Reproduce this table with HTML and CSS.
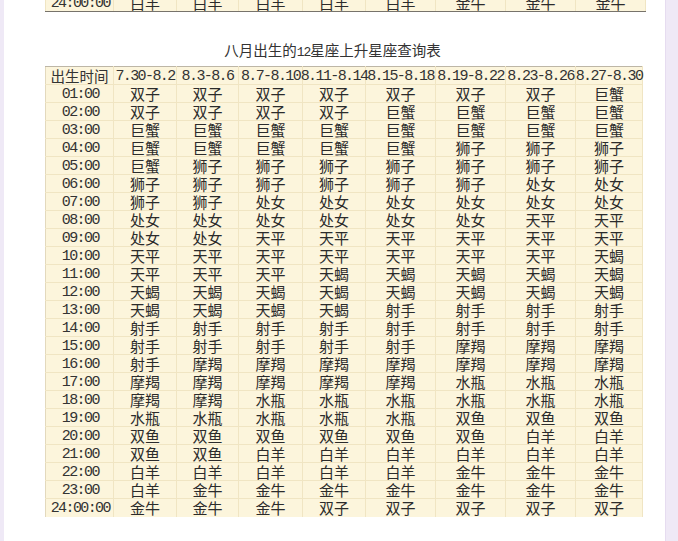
FILE: index.html
```html
<!DOCTYPE html>
<html lang="zh-CN">
<head>
<meta charset="utf-8">
<title>八月出生的12星座上升星座查询表</title>
<link rel="stylesheet" href="styles.css">
</head>
<body>
<div class="page">
  <table class="grid prev">
    <colgroup>
      <col class="c0"><col class="c1"><col class="c2"><col class="c3"><col class="c4"><col class="c5"><col class="c6"><col class="c7"><col class="c8w">
    </colgroup>
    <tr><td class="t">24:00:00</td><td>白羊</td><td>白羊</td><td>白羊</td><td>白羊</td><td>白羊</td><td>金牛</td><td>金牛</td><td>金牛</td></tr>
  </table>

  <h1 class="title">八月出生的<span class="num">12</span>星座上升星座查询表</h1>

  <table class="grid main">
    <colgroup>
      <col class="c0"><col class="c1"><col class="c2"><col class="c3"><col class="c4"><col class="c5"><col class="c6"><col class="c7"><col class="c8">
    </colgroup>
    <tr class="hd"><td><span>出生时间</span></td><td><span>7.30-8.2</span></td><td><span>8.3-8.6</span></td><td><span>8.7-8.10</span></td><td><span>8.11-8.14</span></td><td><span>8.15-8.18</span></td><td><span>8.19-8.22</span></td><td><span>8.23-8.26</span></td><td><span>8.27-8.30</span></td></tr>
    <tr><td class="t">01:00</td><td>双子</td><td>双子</td><td>双子</td><td>双子</td><td>双子</td><td>双子</td><td>双子</td><td>巨蟹</td></tr>
    <tr><td class="t">02:00</td><td>双子</td><td>双子</td><td>双子</td><td>双子</td><td>巨蟹</td><td>巨蟹</td><td>巨蟹</td><td>巨蟹</td></tr>
    <tr><td class="t">03:00</td><td>巨蟹</td><td>巨蟹</td><td>巨蟹</td><td>巨蟹</td><td>巨蟹</td><td>巨蟹</td><td>巨蟹</td><td>巨蟹</td></tr>
    <tr><td class="t">04:00</td><td>巨蟹</td><td>巨蟹</td><td>巨蟹</td><td>巨蟹</td><td>巨蟹</td><td>狮子</td><td>狮子</td><td>狮子</td></tr>
    <tr><td class="t">05:00</td><td>巨蟹</td><td>狮子</td><td>狮子</td><td>狮子</td><td>狮子</td><td>狮子</td><td>狮子</td><td>狮子</td></tr>
    <tr><td class="t">06:00</td><td>狮子</td><td>狮子</td><td>狮子</td><td>狮子</td><td>狮子</td><td>狮子</td><td>处女</td><td>处女</td></tr>
    <tr><td class="t">07:00</td><td>狮子</td><td>狮子</td><td>处女</td><td>处女</td><td>处女</td><td>处女</td><td>处女</td><td>处女</td></tr>
    <tr><td class="t">08:00</td><td>处女</td><td>处女</td><td>处女</td><td>处女</td><td>处女</td><td>处女</td><td>天平</td><td>天平</td></tr>
    <tr><td class="t">09:00</td><td>处女</td><td>处女</td><td>天平</td><td>天平</td><td>天平</td><td>天平</td><td>天平</td><td>天平</td></tr>
    <tr><td class="t">10:00</td><td>天平</td><td>天平</td><td>天平</td><td>天平</td><td>天平</td><td>天平</td><td>天平</td><td>天蝎</td></tr>
    <tr><td class="t">11:00</td><td>天平</td><td>天平</td><td>天平</td><td>天蝎</td><td>天蝎</td><td>天蝎</td><td>天蝎</td><td>天蝎</td></tr>
    <tr><td class="t">12:00</td><td>天蝎</td><td>天蝎</td><td>天蝎</td><td>天蝎</td><td>天蝎</td><td>天蝎</td><td>天蝎</td><td>天蝎</td></tr>
    <tr><td class="t">13:00</td><td>天蝎</td><td>天蝎</td><td>天蝎</td><td>天蝎</td><td>射手</td><td>射手</td><td>射手</td><td>射手</td></tr>
    <tr><td class="t">14:00</td><td>射手</td><td>射手</td><td>射手</td><td>射手</td><td>射手</td><td>射手</td><td>射手</td><td>射手</td></tr>
    <tr><td class="t">15:00</td><td>射手</td><td>射手</td><td>射手</td><td>射手</td><td>射手</td><td>摩羯</td><td>摩羯</td><td>摩羯</td></tr>
    <tr><td class="t">16:00</td><td>射手</td><td>摩羯</td><td>摩羯</td><td>摩羯</td><td>摩羯</td><td>摩羯</td><td>摩羯</td><td>摩羯</td></tr>
    <tr><td class="t">17:00</td><td>摩羯</td><td>摩羯</td><td>摩羯</td><td>摩羯</td><td>摩羯</td><td>水瓶</td><td>水瓶</td><td>水瓶</td></tr>
    <tr><td class="t">18:00</td><td>摩羯</td><td>摩羯</td><td>水瓶</td><td>水瓶</td><td>水瓶</td><td>水瓶</td><td>水瓶</td><td>水瓶</td></tr>
    <tr><td class="t">19:00</td><td>水瓶</td><td>水瓶</td><td>水瓶</td><td>水瓶</td><td>水瓶</td><td>双鱼</td><td>双鱼</td><td>双鱼</td></tr>
    <tr><td class="t">20:00</td><td>双鱼</td><td>双鱼</td><td>双鱼</td><td>双鱼</td><td>双鱼</td><td>双鱼</td><td>白羊</td><td>白羊</td></tr>
    <tr><td class="t">21:00</td><td>双鱼</td><td>双鱼</td><td>白羊</td><td>白羊</td><td>白羊</td><td>白羊</td><td>白羊</td><td>白羊</td></tr>
    <tr><td class="t">22:00</td><td>白羊</td><td>白羊</td><td>白羊</td><td>白羊</td><td>白羊</td><td>金牛</td><td>金牛</td><td>金牛</td></tr>
    <tr><td class="t">23:00</td><td>白羊</td><td>金牛</td><td>金牛</td><td>金牛</td><td>金牛</td><td>金牛</td><td>金牛</td><td>金牛</td></tr>
    <tr class="last"><td class="t">24:00:00</td><td>金牛</td><td>金牛</td><td>金牛</td><td>双子</td><td>双子</td><td>双子</td><td>双子</td><td>双子</td></tr>
  </table>
</div>
</body>
</html>
```

FILE: styles.css
```css
html, body {
  margin: 0;
  padding: 0;
}
body {
  background: #efe9f6;
  overflow: hidden;
}
.page {
  margin-left: 4px;
  width: 661px;
  height: 541px;
  background: #ffffff;
  border-right: 1px solid #e6dcf0;
  overflow: hidden;
}
.grid {
  border-collapse: collapse;
  table-layout: fixed;
  margin-left: 41px;
  background: #fcf5dc;
  color: #2b2b2b;
  font-family: "Noto Sans CJK SC", "Noto Sans CJK JP", sans-serif;
  font-size: 15px;
}
.c0 { width: 68px; }
.c1 { width: 63px; }
.c2 { width: 62px; }
.c3 { width: 64px; }
.c4 { width: 63px; }
.c5 { width: 70px; }
.c6 { width: 70px; }
.c7 { width: 70px; }
.c8 { width: 67px; }
.c8w { width: 70px; }
.grid tr {
  height: 18px;
}
.grid td {
  padding: 0;
  height: 17px;
  line-height: 17px;
  text-align: center;
  white-space: nowrap;
  border: 1px solid #f0e5c3;
  overflow: visible;
}
.grid td.t {
  font-family: "Liberation Mono", "Noto Sans CJK SC", monospace;
  font-size: 15px;
  letter-spacing: -1.6px;
  text-indent: 1.6px;
  padding-top: 2px;
  height: 15px;
  line-height: 15px;
  color: #333;
}
.prev {
  margin-top: -7px;
  border-left: 1px solid #b9b3a6;
}
.prev td {
  border-bottom: 1px solid #77736b;
}
.title {
  margin: 28px 0 0;
  height: 20px;
  line-height: 20px;
  text-align: center;
  font-family: "Noto Sans CJK SC", "Noto Sans CJK JP", sans-serif;
  font-size: 14.5px;
  font-weight: 400;
  color: #333;
  padding-right: 4px;
}
.title .num {
  font-family: "Liberation Mono", monospace;
  font-size: 13px;
  letter-spacing: -1px;
}
.main {
  margin-top: 6px;
}
.main tr.hd td {
  border-top: 1px solid #bdb6a6;
  font-family: "Liberation Mono", "Noto Sans CJK SC", monospace;
  font-size: 15px;
  letter-spacing: -1.6px;
  padding-top: 2px;
  height: 15px;
  line-height: 15px;
  color: #333;
}
.main tr.hd td:first-child {
  font-family: "Noto Sans CJK SC", "Noto Sans CJK JP", sans-serif;
  font-size: 14.5px;
  letter-spacing: 0;
  padding-top: 0;
  height: 17px;
  line-height: 17px;
}
.main tr.hd span {
  display: inline-block;
  margin: 0 -8px;
}
.main td:first-child {
  border-left: 1px solid #e3d9bd;
}
.main tr.last td {
  border-bottom: none;
}
```
